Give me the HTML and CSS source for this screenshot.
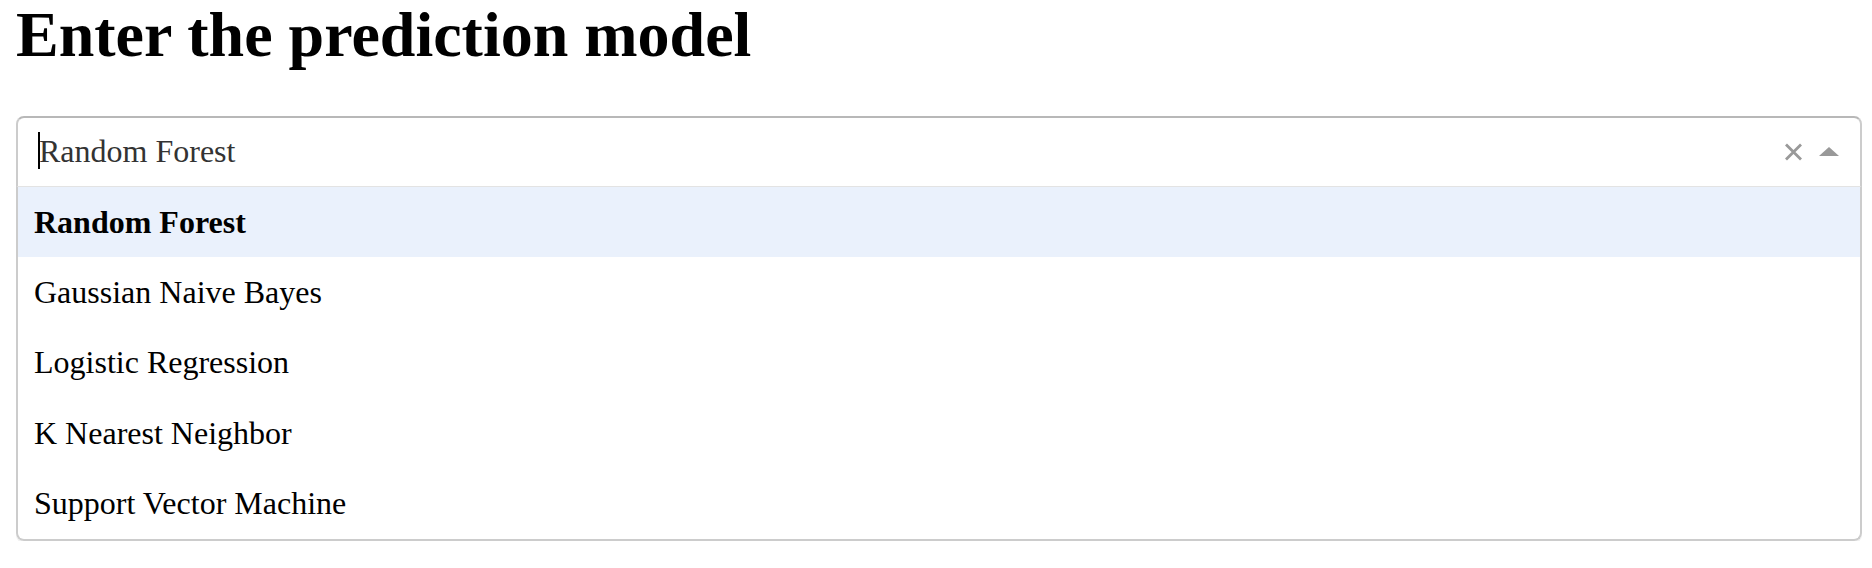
FILE: index.html
```html
<!DOCTYPE html>
<html lang="en">
<head>
<meta charset="utf-8">
<title>Enter the prediction model</title>
<link rel="stylesheet" href="styles.css">
</head>
<body>
<h1 class="title">Enter the prediction model</h1>
<div class="dropdown">
  <div class="control">
    <div class="value"><span class="caret"></span>Random Forest</div>
    <span class="clear" aria-label="Clear value">
      <svg width="19" height="18" viewBox="0 0 19 18"><path d="M2 1.5 L17 16.5 M17 1.5 L2 16.5" stroke="#999" stroke-width="2.8" fill="none"/></svg>
    </span>
    <span class="arrow"></span>
  </div>
  <div class="menu">
    <div class="option focused">Random Forest</div>
    <div class="option">Gaussian Naive Bayes</div>
    <div class="option">Logistic Regression</div>
    <div class="option">K Nearest Neighbor</div>
    <div class="option">Support Vector Machine</div>
  </div>
</div>
</body>
</html>
```
FILE: styles.css
```css
html, body {
  background: #fff;
}
body {
  margin: 0;
  padding: 0 10px 0 16px;
  font-family: "Liberation Serif", "Times New Roman", serif;
  color: #000;
}
.title {
  margin: -2px 0 44px;
  font-size: 64px;
  font-weight: bold;
  line-height: normal;
}
.dropdown {
  font-size: 32px;
}
.control {
  box-sizing: border-box;
  height: 70px;
  display: flex;
  align-items: center;
  padding: 0 21px 0 21px;
  border: 2px solid #ccc;
  border-top-color: #b8b8b8;
  border-bottom: 0;
  border-radius: 8px 8px 0 0;
  background: #fff;
}
.value {
  flex: 1;
  position: relative;
  color: #333;
  line-height: 1;
  margin-top: -2px;
}
.caret {
  position: absolute;
  left: -1px;
  top: -3px;
  width: 2px;
  height: 37px;
  background: #000;
}
.clear {
  display: flex;
  width: 19px;
  height: 18px;
  margin-right: 16px;
}
.arrow {
  width: 0;
  height: 0;
  border-style: solid;
  border-width: 0 10px 9px;
  border-color: transparent transparent #999;
  margin-top: -2px;
}
.menu {
  border: 2px solid #ccc;
  border-top: 1px solid #e3e3e3;
  border-radius: 0 0 8px 8px;
  box-shadow: 0 2px 0 rgba(0, 0, 0, 0.06);
  overflow: hidden;
}
.option {
  height: 70.4px;
  display: flex;
  align-items: center;
  padding: 0 16px;
  line-height: normal;
}
.option.focused {
  background: #eaf1fc;
  font-weight: bold;
}
```
